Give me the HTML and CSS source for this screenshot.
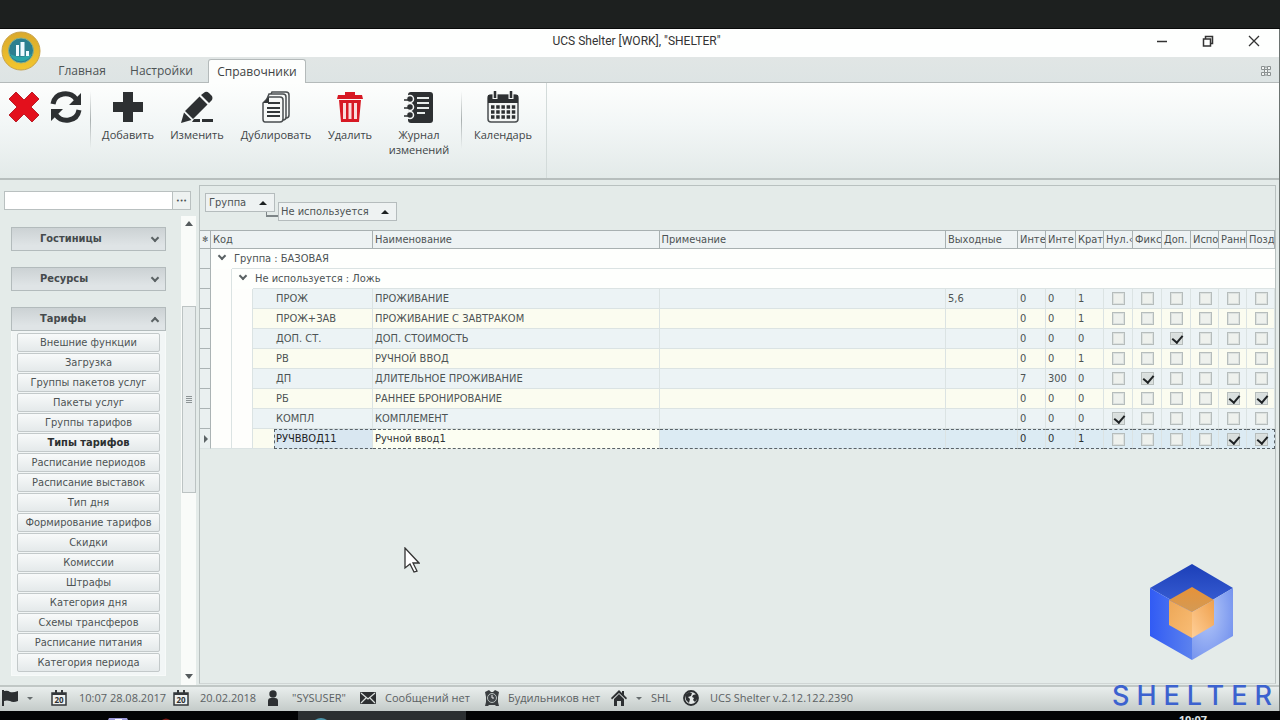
FILE: index.html
```html
<!DOCTYPE html>
<html lang="ru">
<head>
<meta charset="utf-8">
<title>UCS Shelter [WORK], "SHELTER"</title>
<link rel="stylesheet" href="styles.css">
</head>
<body>
<div class="screen-top"></div>
<div class="app">
  <svg class="app-logo" viewBox="0 0 40 40" aria-hidden="true">
    <defs><linearGradient id="gold" x1="0" y1="0" x2="0" y2="1"><stop offset="0" stop-color="#d9a92c"/><stop offset="1" stop-color="#f3c62d"/></linearGradient></defs>
    <circle cx="20" cy="20" r="19" fill="url(#gold)" stroke="#c8a24a"/>
    <circle cx="20" cy="19.500" r="12.500" fill="#2b7f8f" stroke="#8bb08a"/>
    <path d="M9 23 Q20 29 31 23 A12 12 0 0 1 9 23" fill="#2aa5a8"/>
    <path d="M15 14h3v11h-3zM19.500 11h4v14h-4zM25 20h3v5h-3z" fill="#eefaff"/>
  </svg>
  <header class="titlebar">
    <span></span>
    <h1 class="title">UCS Shelter [WORK], "SHELTER"</h1>
    <div class="window-buttons">
      <button aria-label="Свернуть"><svg viewBox="0 0 12 12"><path d="M1 6.500h10" stroke="#333" stroke-width="1.500"/></svg></button>
      <button aria-label="Восстановить"><svg viewBox="0 0 12 12"><path d="M1.500 4h7v7h-7zM3.500 3.500V1.500h7v7h-2" fill="none" stroke="#333" stroke-width="1.500"/></svg></button>
      <button aria-label="Закрыть"><svg viewBox="0 0 12 12"><path d="M1 1l10 10M11 1L1 11" stroke="#333" stroke-width="1.300"/></svg></button>
    </div>
  </header>
  <nav class="tabs">
    <button class="tab">Главная</button>
    <button class="tab">Настройки</button>
    <button class="tab tab-active">Справочники</button>
    <button class="tabs-close" aria-label="Закрыть вкладку"><svg viewBox="0 0 12 12"><path d="M1.500 1.500h3v3h-3zM7.500 1.500h3v3h-3zM1.500 7.500h3v3h-3zM7.500 7.500h3v3h-3zM4.500 2h3M4.500 10h3M4.500 4.500h3v3h-3z" fill="#f4f6f5" stroke="#8a9090"/></svg></button>
  </nav>
  <section class="ribbon">
    <div class="ribbon-group">
      <button class="icon-only" aria-label="Закрыть"><svg viewBox="0 0 32 32"><path d="M8 1l8 8 8-8 7 7-8 8 8 8-7 7-8-8-8 8-7-7 8-8-8-8z" fill="#e3101c" stroke="#b9202a" stroke-linejoin="round"/></svg></button>
      <button class="icon-only" aria-label="Обновить"><svg viewBox="0 0 32 32"><path d="M3 13C5 1 20 0 26 8M29 19C27 31 12 32 6 24" fill="none" stroke="#2d3032" stroke-width="5"/><path d="M31 2v12H19zM1 30V18h12z" fill="#2d3032"/></svg></button>
      <i class="divider"></i>
      <button class="tool w-add"><svg viewBox="0 0 32 32"><path d="M11 1h10v10h10v10H21v10H11V21H1V11h10z" fill="#2d3032"/></svg>Добавить</button>
      <button class="tool w-edit"><svg viewBox="0 0 32 32"><path d="M24 1q2-1 4 1l3 3q1 2 0 4l-3 3-8-8zM18.500 5.500l8 8L12 28l-8-8zM3 21.500l7.500 7.500L0 32zM13 28h6v3h-8zM21 28h11v3H21z" fill="#2d3032"/></svg>Изменить</button>
      <button class="tool w-copy"><svg viewBox="0 0 32 32"><g fill="#f7f9f8" stroke="#4a4e50" stroke-width="1.500"><path d="M12 1h14q3 0 3 3v20q0 3-3 3H10V5z"/><path d="M9 3h14q3 0 3 3v20q0 3-3 3H7V8z"/><path d="M9 6h11q3 0 3 3v19q0 3-3 3H5q-2 0-2-3V12z"/></g><path d="M3 12l6-6v6zM8 11h12v2H8zM7 16h13v2H7zM7 20h13v2H7zM7 24h13v2H7z" fill="#34383a"/></svg>Дублировать</button>
      <button class="tool w-del"><svg viewBox="0 0 32 32"><path d="M11 4V1h10v3h7l1 4H3l1-4zM5 9h22l-2 22H7z" fill="#d71924"/><path d="M9 12h3v16h-3zM14.500 12h3v16h-3zM20 12h3v16h-3z" fill="#f9dcdc"/></svg>Удалить</button>
      <button class="tool w-log"><svg viewBox="0 0 32 32"><rect x="5" y="1" width="25" height="31" rx="3" fill="#2d3032"/><path d="M14 7h12M14 12h12M14 17h12M14 22h8" stroke="#e8eceb" stroke-width="2"/><g fill="#2d3032" stroke="#f4f6f5" stroke-width="1.500"><circle cx="7" cy="8" r="3.500"/><circle cx="7" cy="16" r="3.500"/><circle cx="7" cy="24" r="3.500"/></g><path d="M1 9h7M1 17h7M1 25h7" stroke="#2d3032" stroke-width="1.500"/></svg>Журнал изменений</button>
      <i class="divider"></i>
      <button class="tool w-cal"><svg viewBox="0 0 32 32"><rect x="1" y="4" width="30" height="27" rx="3" fill="#f4f6f5" stroke="#4a4e50" stroke-width="1.500"/><path d="M1 4h30v8H1z" fill="#2d3032"/><path d="M8 1v7M24 1v7" stroke="#f4f6f5" stroke-width="5"/><path d="M8 0v7M24 0v7" stroke="#2d3032" stroke-width="2.500"/><path d="M4 16h25M4 21h25M4 26h25" stroke="#2d3032" stroke-width="3.500" stroke-dasharray="3.500 1.700"/></svg>Календарь</button>
    </div>
  </section>
  <div class="workspace">
    <aside class="sidebar">
      <div class="search"><input type="text" aria-label="Поиск"><button aria-label="Выбрать">•••</button></div>
      <div class="side-body">
        <div class="groups">
          <button class="group-head">Гостиницы<i class="chev"></i></button>
          <button class="group-head">Ресурсы<i class="chev"></i></button>
          <div class="group-open">
            <button class="group-head">Тарифы<i class="chev chev-up"></i></button>
            <div class="items">
              <button>Внешние функции</button>
              <button>Загрузка</button>
              <button>Группы пакетов услуг</button>
              <button>Пакеты услуг</button>
              <button>Группы тарифов</button>
              <button class="current">Типы тарифов</button>
              <button>Расписание периодов</button>
              <button>Расписание выставок</button>
              <button>Тип дня</button>
              <button>Формирование тарифов</button>
              <button>Скидки</button>
              <button>Комиссии</button>
              <button>Штрафы</button>
              <button>Категория дня</button>
              <button>Схемы трансферов</button>
              <button>Расписание питания</button>
              <button>Категория периода</button>
            </div>
          </div>
        </div>
        <div class="scrollbar"><i class="tri-up"></i><div class="track"><div class="thumb"><i class="grip"></i></div></div><i class="tri-down"></i></div>
      </div>
    </aside>
    <main class="content">
      <div class="group-by">
        <button class="chip">Группа<i class="sort"></i></button>
        <i class="link"></i>
        <button class="chip chip-second">Не используется<i class="sort"></i></button>
      </div>
      <table class="grid">
        <colgroup><col class="c-mark"><col class="c-indent"><col class="c-indent"><col class="c-indent"><col class="c-code"><col><col><col class="c-days"><col class="c-28"><col class="c-30"><col class="c-28"><col class="c-29"><col class="c-29"><col class="c-29"><col class="c-28"><col class="c-28"><col class="c-28"></colgroup>
        <thead><tr><th class="star">✻</th><th colspan="4">Код</th><th>Наименование</th><th>Примечание</th><th>Выходные</th><th>Инте</th><th>Инте</th><th>Крат</th><th>Нул.‹</th><th>Фикс</th><th>Доп.</th><th>Испо</th><th>Ранн</th><th>Позд</th></tr></thead>
        <tbody>
          <tr class="grp"><td class="mark"></td><td class="fold"><i class="chev"></i></td><td class="grp-name" colspan="15">Группа : БАЗОВАЯ</td></tr>
          <tr class="grp"><td class="mark"></td><td class="ind"></td><td class="fold"><i class="chev"></i></td><td class="grp-name" colspan="14">Не используется : Ложь</td></tr>
          <tr><td class="mark"></td><td class="ind"></td><td class="ind"></td><td class="pad"></td><td class="code">ПРОЖ</td><td>ПРОЖИВАНИЕ</td><td></td><td>5,6</td><td>0</td><td>0</td><td>1</td><td><input type="checkbox" disabled aria-label="Нул."></td><td><input type="checkbox" disabled aria-label="Фикс"></td><td><input type="checkbox" disabled aria-label="Доп."></td><td><input type="checkbox" disabled aria-label="Испо"></td><td><input type="checkbox" disabled aria-label="Ранн"></td><td><input type="checkbox" disabled aria-label="Позд"></td></tr>
          <tr><td class="mark"></td><td class="ind"></td><td class="ind"></td><td class="pad"></td><td class="code">ПРОЖ+ЗАВ</td><td>ПРОЖИВАНИЕ С ЗАВТРАКОМ</td><td></td><td></td><td>0</td><td>0</td><td>1</td><td><input type="checkbox" disabled aria-label="Нул."></td><td><input type="checkbox" disabled aria-label="Фикс"></td><td><input type="checkbox" disabled aria-label="Доп."></td><td><input type="checkbox" disabled aria-label="Испо"></td><td><input type="checkbox" disabled aria-label="Ранн"></td><td><input type="checkbox" disabled aria-label="Позд"></td></tr>
          <tr><td class="mark"></td><td class="ind"></td><td class="ind"></td><td class="pad"></td><td class="code">ДОП. СТ.</td><td>ДОП. СТОИМОСТЬ</td><td></td><td></td><td>0</td><td>0</td><td>0</td><td><input type="checkbox" disabled aria-label="Нул."></td><td><input type="checkbox" disabled aria-label="Фикс"></td><td><input type="checkbox" disabled checked aria-label="Доп."></td><td><input type="checkbox" disabled aria-label="Испо"></td><td><input type="checkbox" disabled aria-label="Ранн"></td><td><input type="checkbox" disabled aria-label="Позд"></td></tr>
          <tr><td class="mark"></td><td class="ind"></td><td class="ind"></td><td class="pad"></td><td class="code">РВ</td><td>РУЧНОЙ ВВОД</td><td></td><td></td><td>0</td><td>0</td><td>1</td><td><input type="checkbox" disabled aria-label="Нул."></td><td><input type="checkbox" disabled aria-label="Фикс"></td><td><input type="checkbox" disabled aria-label="Доп."></td><td><input type="checkbox" disabled aria-label="Испо"></td><td><input type="checkbox" disabled aria-label="Ранн"></td><td><input type="checkbox" disabled aria-label="Позд"></td></tr>
          <tr><td class="mark"></td><td class="ind"></td><td class="ind"></td><td class="pad"></td><td class="code">ДП</td><td>ДЛИТЕЛЬНОЕ ПРОЖИВАНИЕ</td><td></td><td></td><td>7</td><td>300</td><td>0</td><td><input type="checkbox" disabled aria-label="Нул."></td><td><input type="checkbox" disabled checked aria-label="Фикс"></td><td><input type="checkbox" disabled aria-label="Доп."></td><td><input type="checkbox" disabled aria-label="Испо"></td><td><input type="checkbox" disabled aria-label="Ранн"></td><td><input type="checkbox" disabled aria-label="Позд"></td></tr>
          <tr><td class="mark"></td><td class="ind"></td><td class="ind"></td><td class="pad"></td><td class="code">РБ</td><td>РАННЕЕ БРОНИРОВАНИЕ</td><td></td><td></td><td>0</td><td>0</td><td>0</td><td><input type="checkbox" disabled aria-label="Нул."></td><td><input type="checkbox" disabled aria-label="Фикс"></td><td><input type="checkbox" disabled aria-label="Доп."></td><td><input type="checkbox" disabled aria-label="Испо"></td><td><input type="checkbox" disabled checked aria-label="Ранн"></td><td><input type="checkbox" disabled checked aria-label="Позд"></td></tr>
          <tr><td class="mark"></td><td class="ind"></td><td class="ind"></td><td class="pad"></td><td class="code">КОМПЛ</td><td>КОМПЛЕМЕНТ</td><td></td><td></td><td>0</td><td>0</td><td>0</td><td><input type="checkbox" disabled checked aria-label="Нул."></td><td><input type="checkbox" disabled aria-label="Фикс"></td><td><input type="checkbox" disabled aria-label="Доп."></td><td><input type="checkbox" disabled aria-label="Испо"></td><td><input type="checkbox" disabled aria-label="Ранн"></td><td><input type="checkbox" disabled aria-label="Позд"></td></tr>
          <tr class="selected"><td class="mark"><i class="pointer"></i></td><td class="ind"></td><td class="ind"></td><td class="pad"></td><td class="code">РУЧВВОД11</td><td class="focused">Ручной ввод1</td><td></td><td></td><td>0</td><td>0</td><td>1</td><td><input type="checkbox" disabled aria-label="Нул."></td><td><input type="checkbox" disabled aria-label="Фикс"></td><td><input type="checkbox" disabled aria-label="Доп."></td><td><input type="checkbox" disabled aria-label="Испо"></td><td><input type="checkbox" disabled checked aria-label="Ранн"></td><td><input type="checkbox" disabled checked aria-label="Позд"></td></tr>
        </tbody>
      </table>
    </main>
  </div>
  <footer class="status">
    <button class="st st-flag" aria-label="Флаг"><svg viewBox="0 0 16 16"><path d="M0 0h2v16H0zM2 1q4-1 6 1 3 1 8-1v10q-5 2-8 0-3-1-6 0z" fill="#2d3032"/></svg><i class="caret"></i></button>
    <span class="st st-time"><svg viewBox="0 0 16 16"><path d="M1 3h14v12H1z" fill="#eef1f0" stroke="#33373a" stroke-width="1.500"/><path d="M1 3h14v2H1zM4 0h2v4H4zM10 0h2v4h-2z" fill="#33373a"/><text x="8" y="13" class="daynum">20</text></svg>10:07 28.08.2017</span>
    <span class="st st-date"><svg viewBox="0 0 16 16"><path d="M1 3h14v12H1z" fill="#eef1f0" stroke="#33373a" stroke-width="1.500"/><path d="M1 3h14v2H1zM4 0h2v4H4zM10 0h2v4h-2z" fill="#33373a"/><text x="8" y="13" class="daynum">20</text></svg>20.02.2018</span>
    <span class="st st-user"><svg viewBox="0 0 16 16"><circle cx="8" cy="4" r="3.700" fill="#2d3032"/><path d="M3 16V11q0-3 3-3h4q3 0 3 3v5z" fill="#2d3032"/></svg>"SYSUSER"</span>
    <span class="st st-mail"><svg viewBox="0 0 16 16"><rect y="2" width="16" height="12" rx="1" fill="#2d3032"/><path d="M1 3l7 6 7-6M1 13l5-5M15 13l-5-5" fill="none" stroke="#dde2e0" stroke-width="1.200"/></svg>Сообщений нет</span>
    <span class="st st-alarm"><svg viewBox="0 0 16 16"><path d="M1 2l4-2 2 2h2l2-2 4 2-1 5v5l1 4h-3l-1-1H5l-1 1H1l1-4V7z" fill="#3a3e40"/><circle cx="8" cy="8" r="4.500" fill="#42474a" stroke="#b8bfbd"/><path d="M8 5v3h2" stroke="#eee" fill="none"/></svg>Будильников нет</span>
    <button class="st st-home"><svg viewBox="0 0 16 16"><path d="M0 8L8 0l3 3V1h2v4l3 3-1 1.500L8 3 1 9.500z" fill="#2d3032"/><path d="M3 9l5-5 5 5v7h-3v-5H6v5H3z" fill="#2d3032"/></svg><i class="caret"></i>SHL</button>
    <span class="st st-ver"><svg viewBox="0 0 16 16"><circle cx="8" cy="8" r="7" fill="#e5e9e8" stroke="#2d3032" stroke-width="1.800"/><path d="M2 5l4-3 3 1-1 3-3 1 2 2-1 4-3-3zM10 5l4-1 1 4-3 4-2-2 1-2-2-1z" fill="#2d3032"/></svg>UCS Shelter v.2.12.122.2390</span>
  </footer>
</div>
<div class="taskbar">
  <svg class="task-icons" viewBox="0 0 90 9" aria-hidden="true"><path d="M0 9l1-2h18l1 2z" fill="#9d9ad8"/><path d="M7 9V8h7v1z" fill="#fff"/><path d="M54 9q4-3 8 0z" fill="#7a1d18"/></svg>
  <div class="task"><svg viewBox="0 0 60 9" aria-hidden="true"><path d="M17 9q6-4 12 0z" fill="#4b93a8"/></svg></div>
  <span class="clock">10:07</span>
</div>

<svg class="cursor" viewBox="0 0 16 26" aria-hidden="true"><path d="M1 1v20l5-4 4 8 3-1-4-8h6z" fill="#fff" stroke="#333" stroke-width="1.300"/></svg>
<div class="brand">
  <svg viewBox="0 0 84 96" aria-hidden="true">
    <defs>
      <linearGradient id="top" x1="0" y1="0" x2="0" y2="1"><stop offset="0" stop-color="#1c3fb8"/><stop offset="1" stop-color="#3d63d8"/></linearGradient>
      <linearGradient id="left" x1="0" y1="0" x2="1" y2="0"><stop offset="0" stop-color="#315bf4"/><stop offset="1" stop-color="#5c82ee"/></linearGradient>
      <radialGradient id="right" cx="0.350" cy="0.350" r="0.750"><stop offset="0" stop-color="#b5c9f8"/><stop offset="1" stop-color="#7492ee"/></radialGradient>
      <linearGradient id="otop" x1="0" y1="0" x2="0" y2="1"><stop offset="0" stop-color="#e79238"/><stop offset="1" stop-color="#d39a55"/></linearGradient>
      <linearGradient id="oleft" x1="0" y1="0" x2="1" y2="1"><stop offset="0" stop-color="#eda757"/><stop offset="1" stop-color="#f9bd75"/></linearGradient>
      <linearGradient id="oright" x1="0" y1="1" x2="1" y2="0"><stop offset="0" stop-color="#ffcf98"/><stop offset="1" stop-color="#efa04c"/></linearGradient>
    </defs>
    <path d="M42 0l41 24-41 24L0 24z" fill="url(#top)"/>
    <path d="M0 24l42 24v48L0 72z" fill="url(#left)"/>
    <path d="M83 24L42 48v48l41-24z" fill="url(#right)"/>
    <path d="M42 23l22 13-22 12-23-12z" fill="url(#otop)"/>
    <path d="M19 36l23 12v26L19 61z" fill="url(#oleft)"/>
    <path d="M64 36L42 48v26l22-13z" fill="url(#oright)"/>
  </svg>
  <div class="brand-name">SHELTER</div>
</div>
</body>
</html>
```
FILE: styles.css
```css
* { box-sizing: border-box; }
body {
  margin: 0; height: 100vh; display: flex; flex-direction: column; overflow: hidden;
  background: #000; color: #4d5354;
  font: 11px/14px "DejaVu Sans Condensed", "DejaVu Sans", sans-serif;
}
button { font: inherit; color: inherit; border: 0; background: none; padding: 0; margin: 0; }
svg { display: block; flex: none; }
i { flex: none; }

.screen-top { height: 29px; background: #1d201f; border-bottom: 1px solid #090a0a; flex: none; }
.app { position: relative; flex: 1; min-height: 0; display: flex; flex-direction: column; background: #e4ebe9; border-right: 1px solid #6c7371; }
.app-logo { position: absolute; left: 1px; top: 2px; width: 40px; height: 40px; z-index: 1; }

.titlebar { display: grid; grid-template-columns: 1fr auto 1fr; align-items: center; height: 28px; padding: 0 19px 4px 13px; background: #fefffe; flex: none; }
.title { margin: 0; font: 12px/16px Roboto, "Open Sans", sans-serif; color: #333; }
.window-buttons { display: flex; justify-content: flex-end; gap: 34px; }
.window-buttons svg { width: 12px; height: 12px; }

.tabs { display: flex; align-items: stretch; height: 26px; padding: 2px 7px 0 44px; background: linear-gradient(#e1e6e5, #dde4e4); border-bottom: 1px solid #b4baba; flex: none; font: 12px/16px "Open Sans", "Noto Sans", sans-serif; }
.tab { width: 76px; }
.tab + .tab { width: 83px; }
.tab + .tab-active { width: 98px; margin: 0 0 -1px 5px; background: #fdfefd; border: 1px solid #b4baba; border-bottom: 0; border-radius: 3px 3px 0 0; color: #3d4243; }
.tabs-close { margin-left: auto; }
.tabs-close svg { width: 12px; height: 12px; }

.ribbon { display: flex; height: 97px; background: linear-gradient(#fdfefd, #f2f6f6 45%, #e3eae9); border-bottom: 2px solid #b7bebd; flex: none; font: 11px/15px "Open Sans", "Noto Sans", sans-serif; color: #404547; }
.ribbon-group { display: flex; align-items: flex-start; padding: 8px 2px 0 8px; border-right: 1px solid #d3dbda; }
.ribbon svg { width: 32px; height: 32px; }
.icon-only { margin-right: 10px; }
.icon-only + .icon-only { margin-right: 8px; }
.divider { width: 1px; height: 58px; background: linear-gradient(transparent, #a9b0b0, transparent); }
.tool { display: flex; flex-direction: column; align-items: center; gap: 4px; text-align: center; }
.w-add { width: 74px; }
.w-edit { width: 64px; }
.w-copy { width: 94px; }
.w-del { width: 54px; }
.w-log { width: 84px; padding: 0 8px; }
.w-cal { width: 82px; }

.workspace { flex: 1; min-height: 0; display: flex; gap: 3px; padding-top: 5px; }
.sidebar { width: 196px; display: flex; flex-direction: column; padding-left: 4px; flex: none; }
.search { display: flex; height: 19px; width: 187px; margin-top: 6px; flex: none; }
.search input { flex: 1; min-width: 0; border: 1px solid #b9c0c0; background: #fff; font: inherit; padding: 0 4px; }
.search button { width: 18px; border: 1px solid #b9c0c0; border-left: 0; background: #eef2f1; font-size: 7px; }
.side-body { flex: 1; min-height: 0; display: flex; margin-top: 6px; }
.groups { flex: 1; min-width: 0; display: flex; flex-direction: column; gap: 16px; padding: 11px 15px 0 7px; }
.group-head { display: flex; align-items: center; justify-content: space-between; width: 100%; height: 24px; padding: 0 7px 0 28px; border: 1px solid #b3bbbc; background: linear-gradient(#ccd2d4, #dfe4e6 80%); font-weight: bold; color: #454a4c; }
.chev { width: 6px; height: 6px; border: solid #5b6264; border-width: 0 2px 2px 0; transform: rotate(45deg); display: inline-block; margin-bottom: 3px; }
.chev-up { transform: rotate(225deg); margin-bottom: -3px; }
.items { display: flex; flex-direction: column; gap: 1px; padding: 2px 5px 3px; background: #f2f6f6; border: 1px solid #f7faf9; border-top: 0; }
.items button { height: 19px; border: 1px solid #c3c9ca; border-radius: 2px; background: linear-gradient(#f8fafa, #e4e9ea); }
.items .current { font-weight: bold; color: #2c3031; }

.scrollbar { width: 15px; display: flex; flex-direction: column; align-items: center; justify-content: space-between; padding: 5px 0 6px; background: #f9fbf9; }
.tri-up, .tri-down, .sort, .caret { width: 0; height: 0; border: 4px solid transparent; }
.tri-up { border-top: 0; border-bottom: 5px solid #555b5d; }
.tri-down { border-bottom: 0; border-top: 5px solid #555b5d; }
.track { flex: 1; width: 14px; padding-top: 80px; }
.thumb { height: 187px; display: flex; align-items: center; justify-content: center; border: 1px solid #bcc3c3; background: #e7ecec; }
.grip { width: 6px; height: 7px; background: repeating-linear-gradient(#8d9496 0 1px, transparent 1px 2px); }

.content { flex: 1; min-width: 0; margin: 0 3px 1px 0; border: 1px solid #b9c1c0; border-bottom-color: #d0d6d5; }
.group-by { display: flex; align-items: flex-start; height: 44px; padding: 7px 4px 0 5px; }
.chip { display: flex; align-items: center; justify-content: space-between; width: 70px; height: 19px; padding: 0 7px 0 3px; border: 1px solid #b5bcbd; background: #eef2f2; }
.chip-second { width: 119px; margin-top: 9px; padding-left: 2px; }
.link { width: 12px; height: 5px; margin: 19px 0 0 -9px; border: solid #7d8587; border-width: 0 0 2px 1px; }
.sort { border-top: 0; border-bottom: 4px solid #1c2021; }

.grid { width: 100%; table-layout: fixed; border-collapse: separate; border-spacing: 0; }
.c-mark { width: 11px; }
.c-indent { width: 21px; }
.c-code { width: 99px; }
.c-days { width: 72px; }
.c-28 { width: 28px; }
.c-29 { width: 29px; }
.c-30 { width: 30px; }
.grid th { height: 19px; padding: 0 0 0 2px; overflow: hidden; white-space: nowrap; text-align: left; font-weight: normal; background: #edf2f3; border: solid #a8b0b1; border-width: 1px 1px 1px 0; }
.grid .star { padding: 0; font-size: 8px; text-align: center; }
.grid td { height: 20px; padding: 0 0 0 2px; overflow: hidden; white-space: nowrap; background: #ecf3f5; border: solid #dbe3e3; border-width: 0 1px 1px 0; }
.grid tr:nth-child(even) td { background: #fbfcf0; }
.grid .mark, .grid tr:nth-child(even) .mark { padding: 0; background: #eaf0f0; border-color: #abb3b4; }
.grid td.ind, .grid tr:nth-child(even) td.ind { background: #fefefc; border-bottom: 0; }
.grid tr.grp td.grp-name, .grid tr.grp td.fold { background: #fefffd; border-right: 0; }
.grid tr.grp td.fold { padding: 0; text-align: center; border-bottom: 0; }
.grid td.pad { border-right: 0; }
.grid input { appearance: none; display: block; width: 13px; height: 13px; margin: 0 0 0 6px; border: 1px solid #b6bdbc; outline: 1px solid #dce1df; outline-offset: -2px; background: #eef1ed; }
.grid input:checked { background: #d9dfde; }
.grid input:checked::after { content: ""; display: block; width: 5px; height: 8px; margin: 0 0 0 3px; border: solid #1e2224; border-width: 0 2px 2px 0; transform: rotate(40deg); }
.pointer { display: block; width: 0; height: 0; margin-left: 4px; border: 4px solid transparent; border-left-color: #5d6466; border-right: 0; }
.grid tr.selected td.code { background: #d9e7f1; color: #1c2124; border-left: 1px dashed #596268; padding-left: 1px; }
.grid tr.selected td { background: #dcebf3; border-bottom: 1px dashed #596268; border-top: 1px dashed #596268; color: #2c3133; }
.grid tr.selected td:last-child { border-right: 1px dashed #596268; }
.grid tr.selected td.focused { background: #fcfef2; }
.grid tr.selected td.mark, .grid tr.selected td.ind, .grid tr.selected td.pad { border-top: 0; border-bottom: 1px solid #dbe3e3; }
.grid tr.selected td.ind { background: #fefefc; }
.grid tr.selected td.pad { background: #fbfcf0; }

.status { display: flex; align-items: center; height: 26px; padding: 0 0 2px 2px; border-top: 2px solid #c0c7c5; background: linear-gradient(#e9eeed, #c4cbc9); flex: none; font: 11px/16px "Open Sans", "Noto Sans", sans-serif; color: #5b6163; }
.st { display: flex; align-items: center; white-space: nowrap; gap: 9px; }
.st svg { width: 16px; height: 16px; }
.st-flag { width: 49px; }
.st-time { width: 122px; gap: 12px; }
.st-date { width: 92px; gap: 11px; }
.st-user { width: 95px; gap: 11px; }
.st-mail { width: 124px; }
.st-alarm { width: 127px; gap: 8px; }
.st-home { width: 72px; }
.st-ver { gap: 11px; }
.caret { border-width: 3px 3px 0; border-top-color: #666d6e; }
.daynum { font: bold 8px "Open Sans", sans-serif; fill: #2d3032; text-anchor: middle; }

.taskbar { display: flex; height: 9px; padding: 0 73px 0 108px; background: #030405; overflow: hidden; flex: none; }
.task-icons { width: 90px; height: 9px; margin-right: 100px; }
.task { width: 168px; background: #2b2f31; }
.task svg { width: 60px; height: 9px; }
.clock { margin-left: auto; padding-top: 2px; font: bold 11px/14px "Open Sans", sans-serif; color: #dfe3e3; }

.cursor { position: absolute; left: 404px; top: 547px; width: 16px; height: 26px; }
.brand { position: absolute; right: 8px; bottom: 6px; display: flex; flex-direction: column; align-items: center; gap: 18px; }
.brand svg { width: 84px; height: 96px; }
.brand-name { margin-right: -7px; font: 500 27px/36px Inter, "Open Sans", sans-serif; letter-spacing: 7px; color: #3c62cf; }
```
